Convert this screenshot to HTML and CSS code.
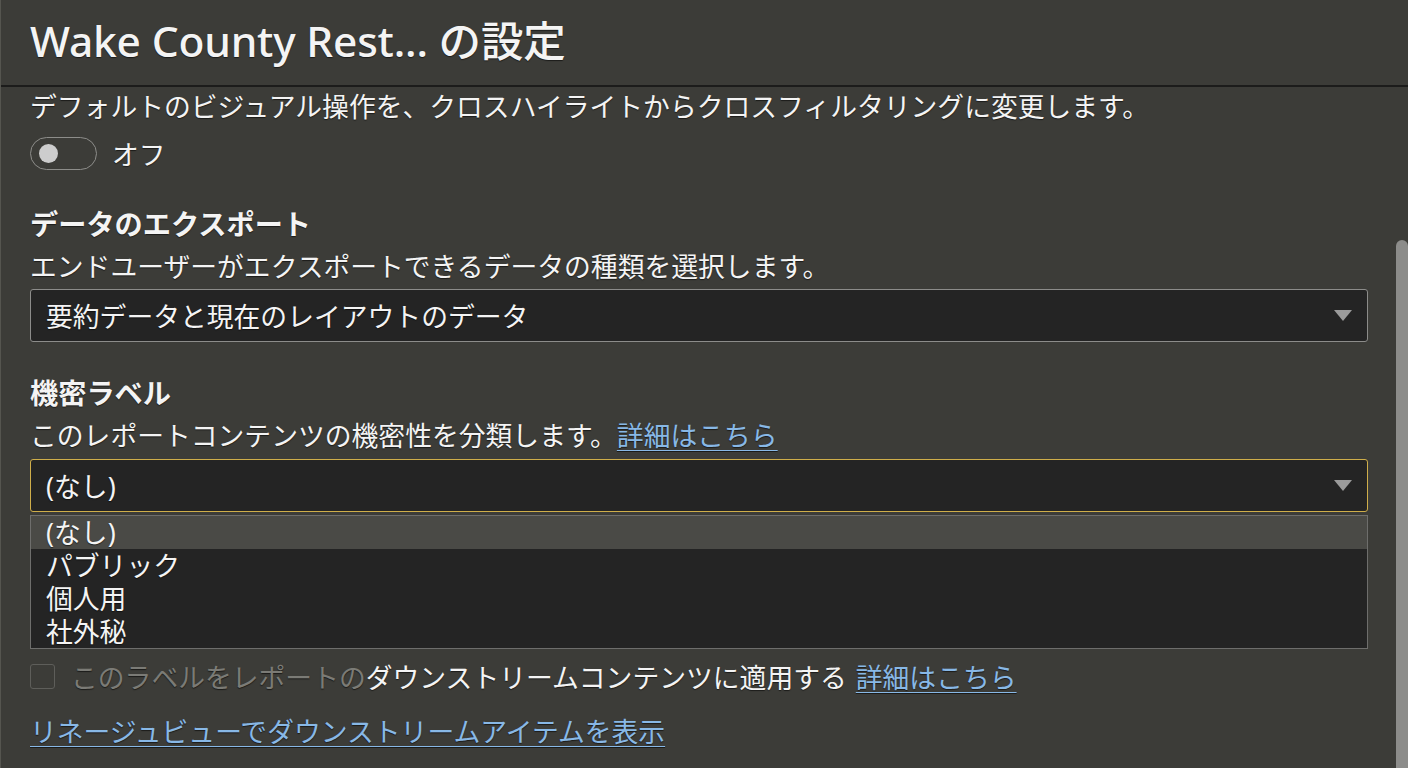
FILE: index.html
```html
<!DOCTYPE HTML>
<html lang="ja">
  <head>
    <title>Wake County Rest... の設定</title>
    <meta charset="utf-8">
    <link rel="stylesheet" href="styles.css">
  </head>
  <body>

  <div id="header">
    <h1 class="title">Wake County Rest... の設定</h1>
  </div>

  <div id="content">
    <div class="desc">デフォルトのビジュアル操作を、クロスハイライトからクロスフィルタリングに変更します。</div>
    <div class="toggleRow">
      <span class="toggle"><span class="knob"></span></span>
      <span class="toggleLabel">オフ</span>
    </div>

    <div class="heading first">データのエクスポート</div>
    <div class="desc tight">エンドユーザーがエクスポートできるデータの種類を選択します。</div>
    <div class="select">
      <span>要約データと現在のレイアウトのデータ</span>
      <span class="arrow"></span>
    </div>

    <div class="heading">機密ラベル</div>
    <div class="desc tight">このレポートコンテンツの機密性を分類します。<a href="#">詳細はこちら</a></div>
    <div class="select focused">
      <span>(なし)</span>
      <span class="arrow"></span>
    </div>
    <div class="options">
      <div class="option active">(なし)</div>
      <div class="option">パブリック</div>
      <div class="option">個人用</div>
      <div class="option">社外秘</div>
    </div>

    <div class="checkRow">
      <span class="checkbox"></span>
      <span class="dim">このラベルをレポートの</span><span>ダウンストリームコンテンツに適用する</span>
      <a href="#" class="checkLink">詳細はこちら</a>
    </div>

    <div class="lineage"><a href="#">リネージュビューでダウンストリームアイテムを表示</a></div>
  </div>

  <div id="scrollbar"></div>

  </body>
</html>
```

FILE: styles.css
```css
html {
  height: 100%;
}
body {
  margin: 0;
  padding: 0;
  height: 100%;
  overflow: hidden;
  background: #3c3c38;
  color: #f4f4f4;
  font-family: "Noto Sans", "Noto Sans CJK JP", sans-serif;
  font-size: 26.8px;
  text-shadow: 0 1px 1px rgba(0,0,0,0.55);
  border-left: 1px solid #55554f;
  box-sizing: border-box;
}

a {
  color: #88b8e6;
  text-decoration: underline;
  text-underline-offset: 4px;
  text-decoration-thickness: 1px;
}

#header {
  height: 87px;
  border-bottom: 2px solid #1c1c1b;
  padding-left: 29px;
  padding-bottom: 8px;
  box-sizing: border-box;
  display: flex;
  align-items: center;
}

.title {
  margin: 0;
  font-size: 42.5px;
  font-weight: 500;
  letter-spacing: -0.2px;
}

#content {
  padding: 0 40px 0 29px;
}

.desc {
  line-height: 40px;
  height: 40px;
  white-space: nowrap;
}
.desc.tight {
  margin-top: 3px;
}

.toggleRow {
  display: flex;
  align-items: center;
  gap: 15px;
  margin-top: 10px;
  height: 33px;
}
.toggle {
  width: 67px;
  height: 33px;
  border: 1.5px solid #8d8d8a;
  border-radius: 17px;
  display: flex;
  align-items: center;
  padding-left: 8px;
  box-sizing: border-box;
}
.knob {
  width: 19px;
  height: 19px;
  border-radius: 50%;
  background: #cdcdcd;
}

.heading {
  font-weight: 700;
  font-size: 28.2px;
  line-height: 40px;
  height: 40px;
  margin-top: 31px;
}
.heading.first {
  margin-top: 34px;
}

.select {
  margin-top: 2px;
  height: 53px;
  box-sizing: border-box;
  border: 1px solid #8c8c8a;
  border-radius: 3px;
  background: #242424;
  display: flex;
  align-items: center;
  justify-content: space-between;
  padding: 0 15px 0 15px;
}
.select.focused {
  margin-top: 3px;
  border: 1.5px solid #cfae4a;
}
.arrow {
  width: 0;
  height: 0;
  border-left: 9px solid transparent;
  border-right: 9px solid transparent;
  border-top: 11px solid #9b9b9b;
}

.options {
  margin-top: 3px;
  border: 1px solid #6e6e6c;
  background: #242424;
}
.option {
  height: 33px;
  line-height: 33px;
  padding-left: 15px;
}
.option.active {
  background: #4a4a46;
}

.checkRow {
  margin-top: 7px;
  height: 40px;
  display: flex;
  align-items: center;
  white-space: nowrap;
}
.checkbox {
  width: 25px;
  height: 25px;
  box-sizing: border-box;
  border: 1.5px solid #5e5e5a;
  border-radius: 3px;
  margin-right: 16px;
}
.dim {
  color: #7b7b76;
}
.checkLink {
  margin-left: 9px;
}

.lineage {
  margin-top: 16px;
  height: 40px;
  line-height: 40px;
}

#scrollbar {
  position: absolute;
  right: 0;
  top: 240px;
  bottom: 0;
  width: 12px;
  background: #8c8c8a;
  border-radius: 6px 6px 0 0;
}
```
